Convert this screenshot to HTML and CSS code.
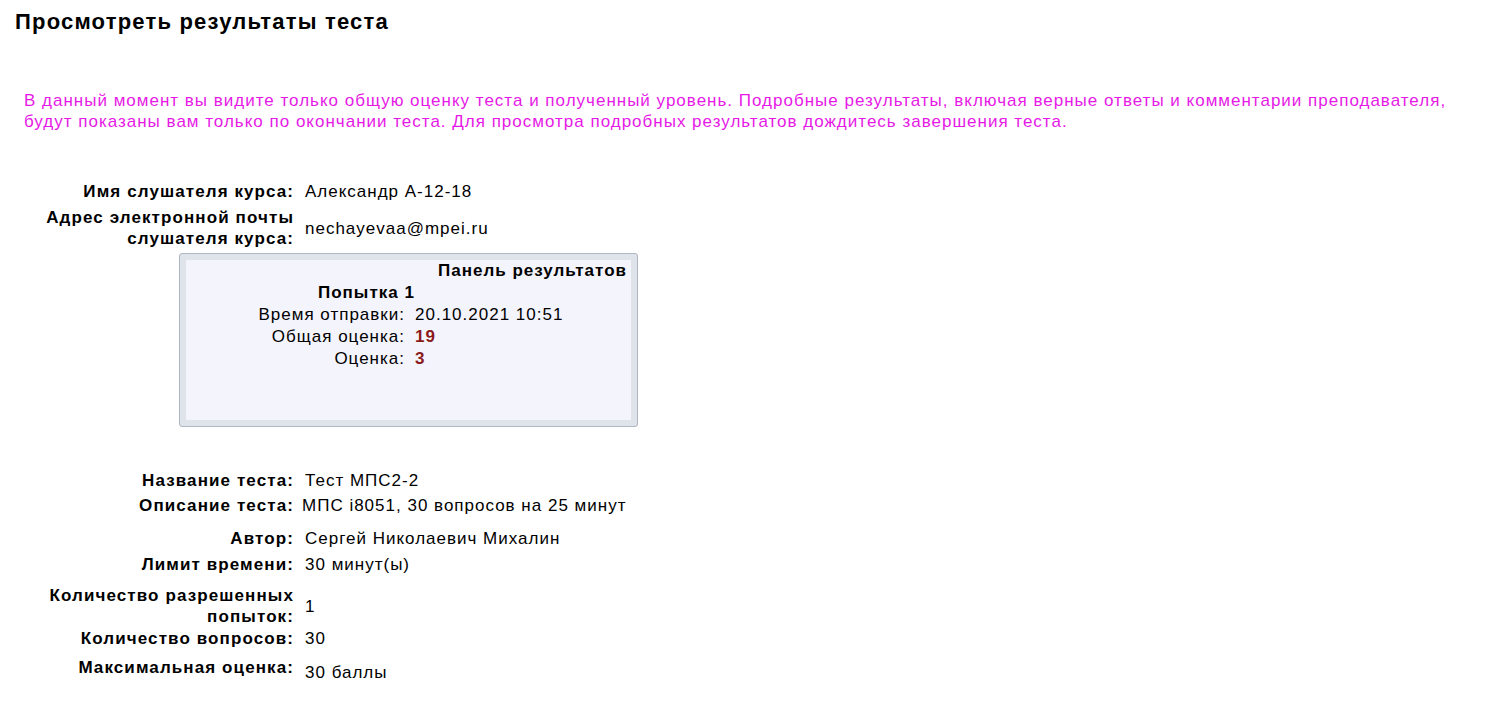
FILE: index.html
```html
<!DOCTYPE html>
<html lang="ru">
<head>
<meta charset="utf-8">
<title>Просмотреть результаты теста</title>
<link rel="stylesheet" href="styles.css">
</head>
<body>
<h1 class="page-title">Просмотреть результаты теста</h1>
<p class="notice">В данный момент вы видите только общую оценку теста и полученный уровень. Подробные результаты, включая верные ответы и комментарии преподавателя, будут показаны вам только по окончании теста. Для просмотра подробных результатов дождитесь завершения теста.</p>

<div class="info">
  <div class="row r-name">
    <div class="label">Имя слушателя курса:</div>
    <div class="value">Александр А-12-18</div>
  </div>
  <div class="row r-email">
    <div class="label">Адрес электронной почты слушателя курса:</div>
    <div class="value">nechayevaa@mpei.ru</div>
  </div>

  <div class="panel">
    <div class="panel-inner">
      <div class="panel-title">Панель результатов</div>
      <div class="attempt">Попытка 1</div>
      <div class="prow">
        <div class="plabel">Время отправки:</div>
        <div class="pvalue">20.10.2021 10:51</div>
      </div>
      <div class="prow">
        <div class="plabel">Общая оценка:</div>
        <div class="pvalue score">19</div>
      </div>
      <div class="prow">
        <div class="plabel">Оценка:</div>
        <div class="pvalue score">3</div>
      </div>
    </div>
  </div>

  <div class="row r-test">
    <div class="label">Название теста:</div>
    <div class="value">Тест МПС2-2</div>
  </div>
  <div class="row r-desc">
    <div class="label">Описание теста:</div>
    <div class="value value-tight">МПС i8051, 30 вопросов на 25 минут</div>
  </div>
  <div class="row r-author">
    <div class="label">Автор:</div>
    <div class="value">Сергей Николаевич Михалин</div>
  </div>
  <div class="row r-limit">
    <div class="label">Лимит времени:</div>
    <div class="value">30 минут(ы)</div>
  </div>
  <div class="row r-attempts">
    <div class="label">Количество разрешенных попыток:</div>
    <div class="value">1</div>
  </div>
  <div class="row r-questions">
    <div class="label">Количество вопросов:</div>
    <div class="value">30</div>
  </div>
  <div class="row r-max">
    <div class="label">Максимальная оценка:</div>
    <div class="value value-low">30 баллы</div>
  </div>
</div>
</body>
</html>
```

FILE: styles.css
```css
html, body {
  margin: 0;
  padding: 0;
  background: #ffffff;
}

body {
  font-family: "Liberation Sans", Arial, sans-serif;
  font-size: 17px;
  letter-spacing: 1px;
  color: #000000;
  line-height: 21px;
}

.page-title {
  margin: 0;
  padding: 10px 0 0 15px;
  font-size: 22px;
  letter-spacing: 1.2px;
  line-height: 24px;
  font-weight: bold;
}

.notice {
  margin: 56px 0 0 0;
  padding: 0 40px 0 24px;
  color: #e619e6;
  line-height: 21px;
}

.info {
  margin-top: 49px;
  padding-left: 44px;
}

.row {
  display: grid;
  grid-template-columns: 250px 1fr;
  column-gap: 11px;
  align-items: center;
}

.label {
  font-weight: bold;
  text-align: right;
  letter-spacing: 1.1px;
}

.value {
  white-space: nowrap;
}

.value-tight {
  margin-left: -3px;
}

.r-max {
  align-items: start;
}

.value-low {
  padding-top: 5px;
}

.r-email { margin-top: 5px; }
.r-test { margin-top: 43px; }
.r-desc { margin-top: 4px; }
.r-author { margin-top: 12px; }
.r-limit { margin-top: 5px; }
.r-attempts { margin-top: 10px; }
.r-questions { margin-top: 1px; }
.r-max { margin-top: 8px; }

.panel {
  margin: 4px 0 0 135px;
  width: 459px;
  border: 1px solid #aeb6c2;
  border-radius: 3px;
  background: #dfe4eb;
  padding: 6px;
  box-sizing: border-box;
  height: 174px;
}

.panel-inner {
  background: #f4f4fd;
  height: 100%;
  box-sizing: border-box;
  padding: 0 4px 0 0;
}

.panel-title {
  font-weight: bold;
  text-align: right;
  line-height: 22px;
}

.attempt {
  font-weight: bold;
  line-height: 22px;
  padding-left: 132px;
}

.prow {
  display: grid;
  grid-template-columns: 219px 1fr;
  column-gap: 10px;
  line-height: 22px;
}

.plabel {
  text-align: right;
}

.score {
  font-weight: bold;
  color: #8b1a1a;
}
```
